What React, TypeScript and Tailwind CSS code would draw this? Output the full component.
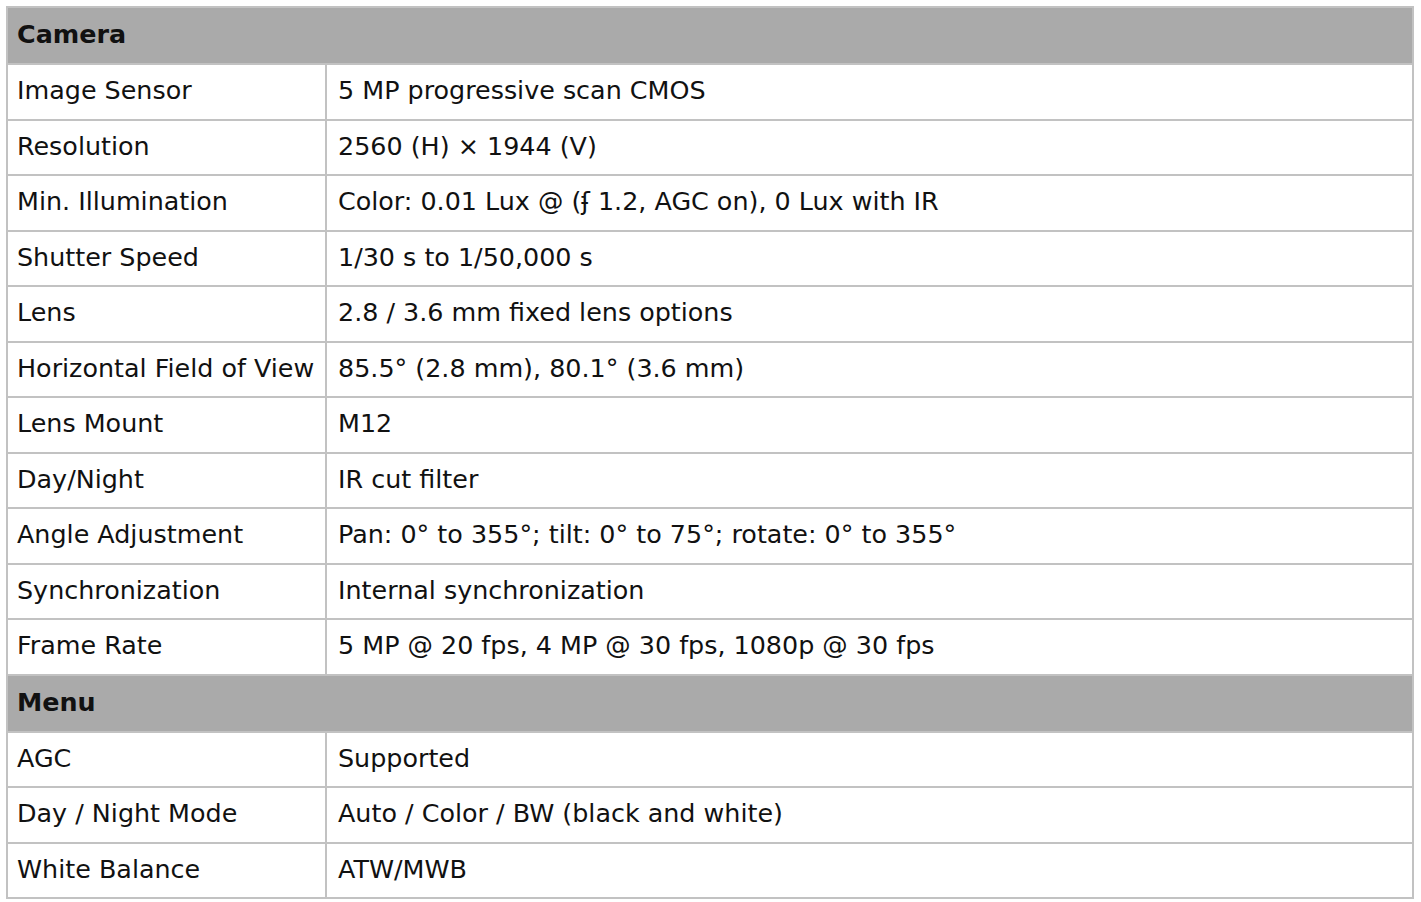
const sections: { title: string; rows: [string, string][] }[] = [
  {
    title: 'Camera',
    rows: [
      ['Image Sensor', '5 MP progressive scan CMOS'],
      ['Resolution', '2560 (H) × 1944 (V)'],
      ['Min. Illumination', 'Color: 0.01 Lux @ (ʄ 1.2, AGC on), 0 Lux with IR'],
      ['Shutter Speed', '1/30 s to 1/50,000 s'],
      ['Lens', '2.8 / 3.6 mm fixed lens options'],
      ['Horizontal Field of View', '85.5° (2.8 mm), 80.1° (3.6 mm)'],
      ['Lens Mount', 'M12'],
      ['Day/Night', 'IR cut filter'],
      ['Angle Adjustment', 'Pan: 0° to 355°; tilt: 0° to 75°; rotate: 0° to 355°'],
      ['Synchronization', 'Internal synchronization'],
      ['Frame Rate', '5 MP @ 20 fps, 4 MP @ 30 fps, 1080p @ 30 fps'],
    ],
  },
  {
    title: 'Menu',
    rows: [
      ['AGC', 'Supported'],
      ['Day / Night Mode', 'Auto / Color / BW (black and white)'],
      ['White Balance', 'ATW/MWB'],
    ],
  },
];

export default function App() {
  return (
    <div className="min-h-[902px] bg-white pl-[6px] pt-[6px] font-['DejaVu_Sans',sans-serif] text-[25.4px] text-[#111]">
      <table className="w-[1408px] border-collapse">
        <tbody>
          {sections.map((section) => (
            <>
              <tr key={section.title} className="h-[57px] bg-[#aaaaaa]">
                <td colSpan={2} className="border-2 border-[#c2c2c2] px-[9px] pb-[2px] font-bold">
                  {section.title}
                </td>
              </tr>
              {section.rows.map(([label, value]) => (
                <tr key={label} className="h-[55.5px]">
                  <td className="w-[319px] border-2 border-[#c2c2c2] px-[9px] pb-[3px] whitespace-nowrap">{label}</td>
                  <td className="border-2 border-[#c2c2c2] pl-[11px] pr-[9px] pb-[3px]">{value}</td>
                </tr>
              ))}
            </>
          ))}
        </tbody>
      </table>
    </div>
  );
}
